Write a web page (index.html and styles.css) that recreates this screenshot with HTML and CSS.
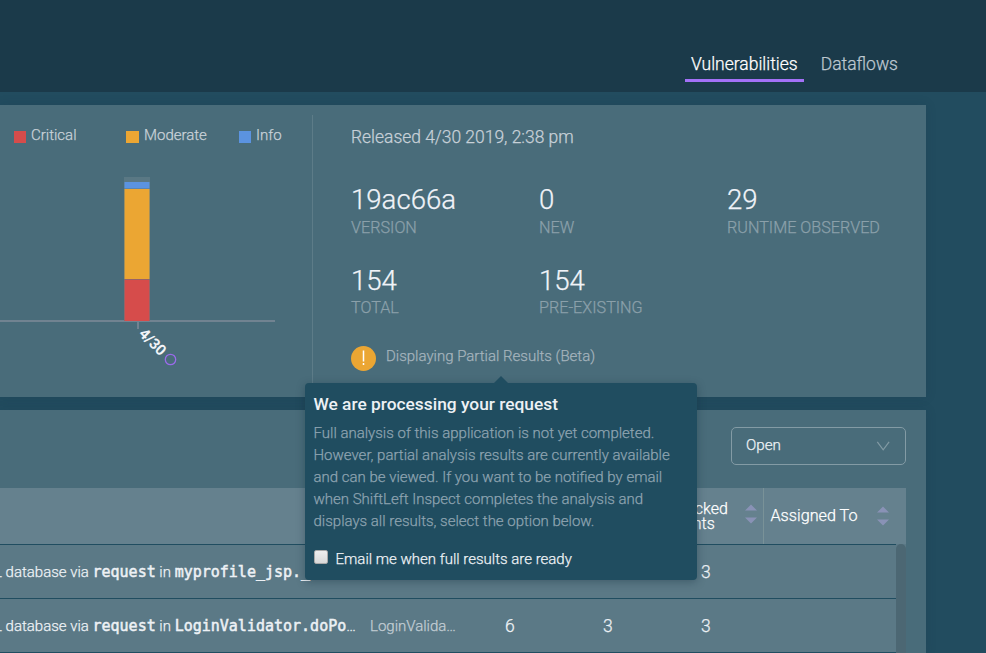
FILE: index.html
```html
<!DOCTYPE html>
<html lang="en">
<head>
<meta charset="utf-8">
<title>Vulnerabilities</title>
<link rel="stylesheet" href="styles.css">
</head>
<body>
<header class="topbar">
  <nav class="tabs">
    <a class="tab tab-active">Vulnerabilities</a>
    <a class="tab">Dataflows</a>
  </nav>
</header>
<main class="content">
  <section class="panel summary">
    <div class="chart">
      <ul class="legend">
        <li class="key"><i class="swatch critical"></i>Critical</li>
        <li class="key"><i class="swatch moderate"></i>Moderate</li>
        <li class="key"><i class="swatch info"></i>Info</li>
      </ul>
      <svg class="plot" width="312" height="210" viewBox="0 0 312 210">
        <rect x="0" y="153" width="275" height="2" fill="#718391"/>
        <rect x="124" y="10" width="26" height="144" fill="#5a7884"/>
        <rect x="124.500" y="15" width="25" height="6.500" fill="#5b93e0"/>
        <rect x="124.500" y="22" width="25" height="90" fill="#eba633"/>
        <rect x="124.500" y="112.500" width="25" height="41.500" fill="#d64c4b"/>
        <rect x="137" y="154" width="2" height="8" fill="#718391"/>
        <text class="tick" transform="translate(138 167.500) rotate(45)">4/30</text>
        <circle cx="170.500" cy="192.500" r="5.200" fill="none" stroke="#9a6bea" stroke-width="1.300"/>
      </svg>
    </div>
    <div class="details">
      <div class="released">Released 4/30 2019, 2:38 pm</div>
      <dl class="stats">
        <div class="stat"><dd>19ac66a</dd><dt>VERSION</dt></div>
        <div class="stat"><dd>0</dd><dt>NEW</dt></div>
        <div class="stat"><dd>29</dd><dt>RUNTIME OBSERVED</dt></div>
        <div class="stat"><dd>154</dd><dt>TOTAL</dt></div>
        <div class="stat"><dd>154</dd><dt>PRE-EXISTING</dt></div>
      </dl>
      <div class="partial">
        <svg width="26" height="27" viewBox="0 0 26 27"><circle cx="12.500" cy="13.500" r="12.500" fill="#eba633"/><path d="M12.500 5.500v11M12.500 18v2" stroke="#fff" stroke-width="1.500"/></svg>
        <span>Displaying Partial Results (Beta)</span>
      </div>
    </div>
  </section>
  <section class="panel findings">
    <div class="toolbar">
      <div class="select"><span>Open</span><svg width="14" height="10" viewBox="0 0 14 10"><path d="M1.300.8 7.200 8.800 13.100.8" fill="none" stroke="#829aa4" stroke-width="1.200"/></svg></div>
    </div>
    <div class="table">
      <div class="thead">
        <div class="th attacked"><span class="stack"><span>Attacked</span><span>Events</span></span><svg class="sort" width="12" height="20" viewBox="0 0 12 20"><path d="M0 6.500 6 .500l6 6zM0 13.500l6 6 6-6z"/></svg></div>
        <div class="th assigned"><span>Assigned To</span><svg class="sort" width="12" height="20" viewBox="0 0 12 20"><path d="M0 6.500 6 .500l6 6zM0 13.500l6 6 6-6z"/></svg></div>
      </div>
      <div class="body">
        <div class="rows">
          <div class="row">
            <div class="desc"><span class="cut">L</span> database via <code>request</code> in <code>myprofile_jsp._</code></div>
            <div class="file"></div><div class="num"></div><div class="num"></div><div class="num">3</div>
          </div>
          <div class="row">
            <div class="desc"><span class="cut">L</span> database via <code>request</code> in <code>LoginValidator.doPo</code>…</div>
            <div class="file">LoginValida…</div><div class="num">6</div><div class="num">3</div><div class="num">3</div>
          </div>
          <div class="row row-last"></div>
        </div>
        <div class="track"><div class="scroll"></div></div>
      </div>
    </div>
  </section>
</main>
<aside class="popover">
  <h2>We are processing your request</h2>
  <p>Full analysis of this application is not yet completed.<br>However, partial analysis results are currently available<br>and can be viewed. If you want to be notified by email<br>when ShiftLeft Inspect completes the analysis and<br>displays all results, select the option below.</p>
  <label><i class="check"></i><span>Email me when full results are ready</span></label>
</aside>
</body>
</html>
```

FILE: styles.css
```css
* { box-sizing: border-box; }
body {
  margin: 0;
  width: 986px;
  height: 653px;
  overflow: hidden;
  background: #224c5f;
  color: #edf1f5;
  font-family: Roboto, sans-serif;
  font-weight: 300;
  font-size: 15px;
  white-space: nowrap;
  -webkit-text-stroke: .25px currentColor;
}
ul, dl, dd, h2, p { margin: 0; padding: 0; }
.topbar {
  height: 92px;
  background: #1b3a4a;
  display: flex;
  justify-content: flex-end;
  padding: 46px 82px 0 0;
}
.tabs { display: flex; gap: 11px; }
.tab { height: 36px; padding: 0 6px; font-size: 17.500px; line-height: 36px; color: #bdc7d0; }
.tab-active { color: #fff; border-bottom: 3px solid #a371f7; }
.content { padding-top: 13px; width: 926px; }
.panel { background: #496c7a; box-shadow: 0 0 10px rgba(20, 50, 65, .15); }
.summary { height: 292px; display: flex; }
.chart { width: 312px; }
.legend { list-style: none; display: grid; grid-template-columns: 112px 113px auto; padding: 20px 0 0 14px; height: 62px; line-height: 20px; color: #c8d1d8; }
.key { display: flex; gap: 5px; }
.swatch { width: 12px; height: 12px; margin-top: 6px; }
.critical { background: #d64c4b; }
.moderate { background: #eba633; width: 13px; }
.info { background: #5b93e0; }
.plot { display: block; }
.tick { font-size: 15px; font-weight: 700; fill: #f1f4f8; }
.details { flex: 1; margin-top: 10px; border-left: 1px solid #5d7c88; padding-left: 38px; }
.released { font-size: 17.450px; line-height: 24px; padding-top: 10px; color: #c7d0d8; }
.stats { display: grid; grid-template-columns: 188px 188px auto; grid-template-rows: 81px 80px; margin-top: 29px; }
.stat dd { font-size: 27.600px; line-height: 36px; height: 36px; margin-top: 4px; color: #f0f3f8; }
.stat dt { font-size: 16.200px; line-height: 20px; color: #8ba0aa; }
.stat:nth-child(n + 4) dt { margin-top: -1px; }
.partial { display: flex; gap: 9px; color: #a4b3bc; line-height: 22px; margin-top: 6px; }
.findings { height: 243px; margin-top: 13px; padding: 17px 20px 0 0; }
.toolbar { display: flex; justify-content: flex-end; height: 61px; }
.select { display: flex; justify-content: space-between; width: 175px; height: 38px; border: 1px solid #839ba5; border-radius: 5px; padding: 0 15px 0 14px; line-height: 34px; font-size: 15.200px; }
.select svg { margin-top: 13px; }
.thead { display: flex; justify-content: flex-end; height: 56px; background: #65818e; color: #fff; font-size: 16.200px; }
.th { display: flex; align-items: center; justify-content: space-between; }
.attacked { width: 98px; padding-right: 6px; border-right: 1px solid #799298; font-size: 16px; }
.attacked .stack { display: flex; flex-direction: column; line-height: 15px; }
.attacked .stack span + span { padding-left: 2px; }
.attacked .sort { margin-bottom: 5px; }
.assigned { width: 142px; padding: 0 17px 0 6.500px; }
.assigned span { padding-bottom: 2px; }
.sort { fill: #8992b6; }
.body { display: flex; height: 109px; }
.rows { width: 896px; }
.row { display: flex; height: 54px; border-top: 1px solid #204d60; background: #5b7986; line-height: 54px; }
.row-last { height: 1px; }
.desc { width: 370px; }
.cut { margin-left: -6px; }
code { font-family: "DejaVu Sans Mono", monospace; font-weight: 400; font-size: 15px; line-height: 20px; -webkit-text-stroke: .5px currentColor; }
.file { width: 135px; color: #c1ccd3; }
.num { width: 98px; font-size: 17.500px; }
.track { width: 10px; background: #5b7986; }
.scroll { height: 109px; border-radius: 5px 5px 0 0; background: #4c6773; }
.popover {
  position: absolute;
  left: 305px;
  top: 383px;
  width: 392px;
  height: 197px;
  padding: 10px 8.500px;
  border-radius: 4px;
  background: #204d60;
  box-shadow: 0 2px 9px rgba(15, 40, 55, .35);
}
.popover::before {
  content: "";
  position: absolute;
  left: 189px;
  top: -7px;
  border: solid transparent;
  border-width: 0 7px 7px;
  border-bottom-color: #204d60;
}
.popover h2 { font-size: 17.350px; font-weight: 500; line-height: 22px; -webkit-text-stroke: 0; }
.popover p { margin-top: 7px; line-height: 22px; color: #8da3b0; }
.popover label { display: flex; gap: 8px; margin-top: 18px; line-height: 18px; }
.check { width: 14px; height: 14px; border: 1px solid #a9a9a9; border-radius: 2px; background: linear-gradient(#eee, #d9d9d9); }
```
